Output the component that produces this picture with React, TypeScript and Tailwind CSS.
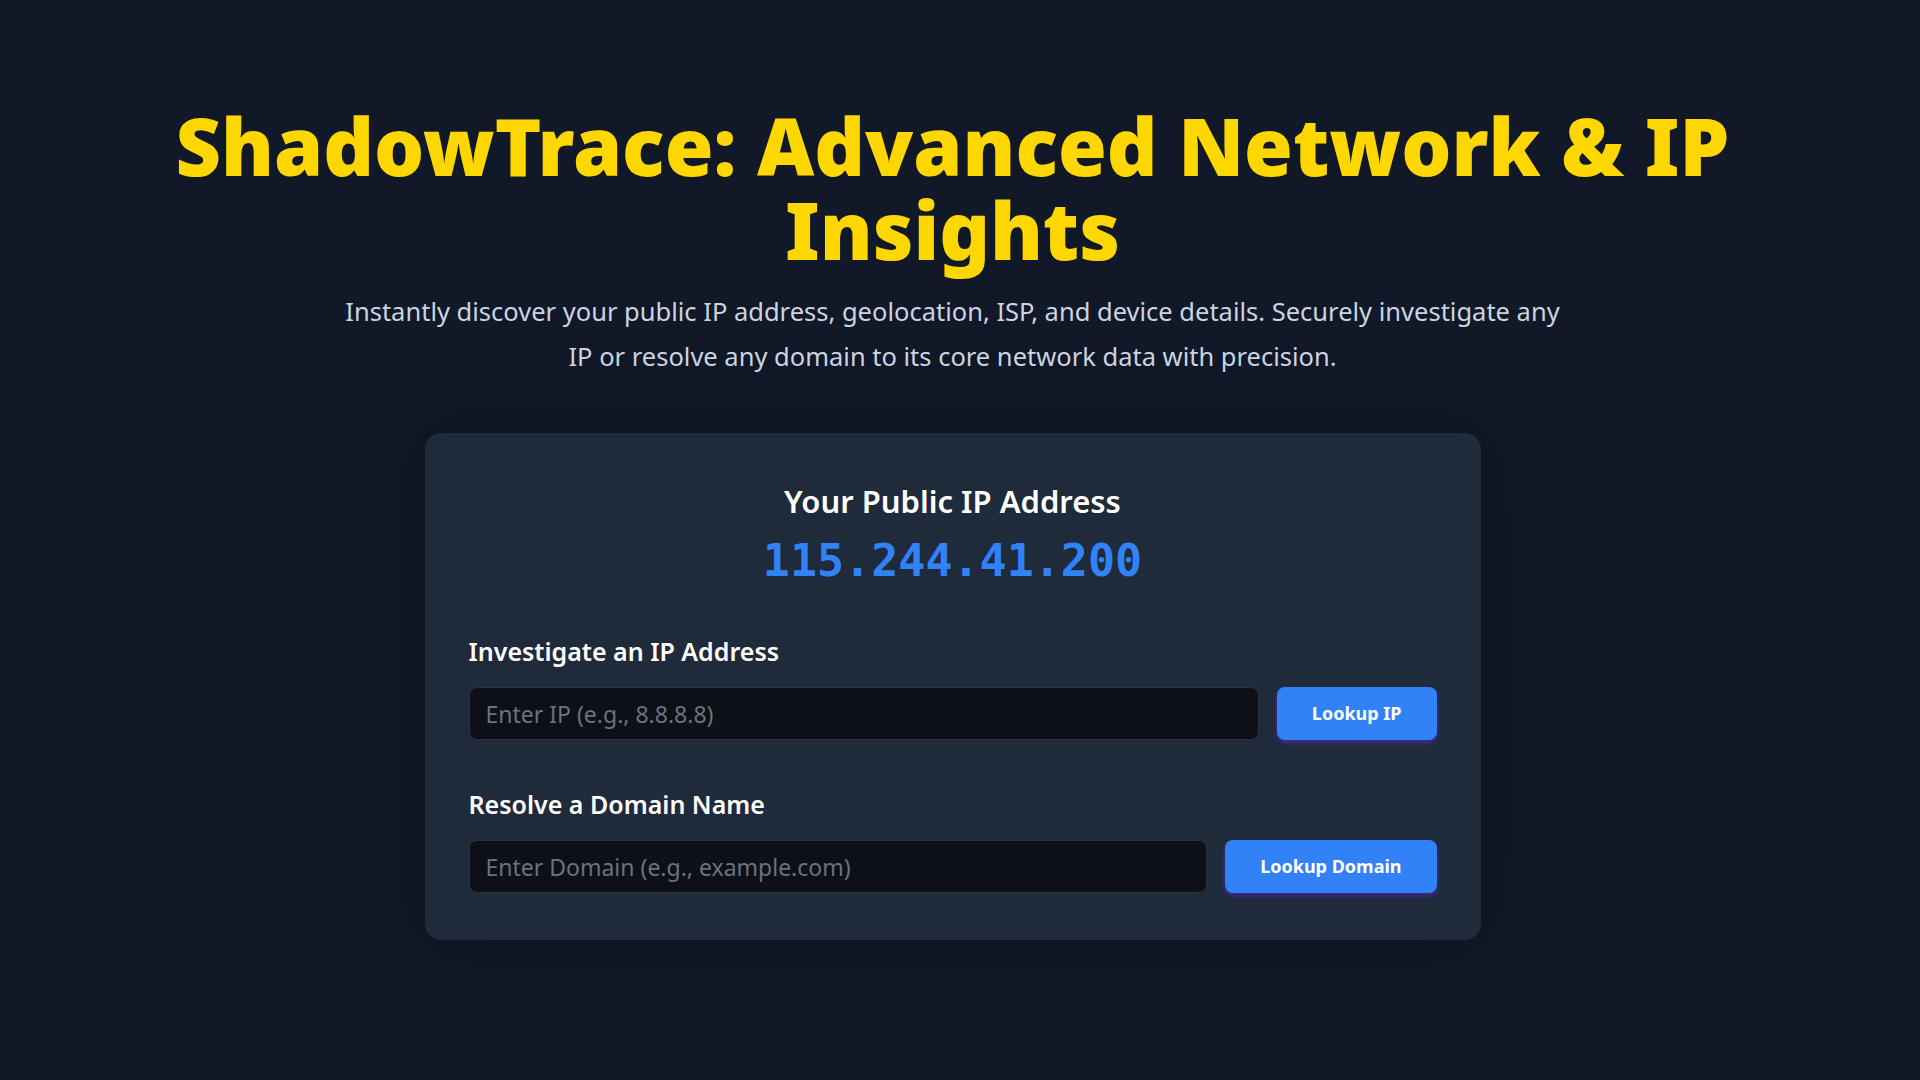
import { useState } from 'react';

const SANS = "font-['Segoe_UI','Noto_Sans','Open_Sans',sans-serif]";

interface LookupRowProps {
  label: string;
  placeholder: string;
  buttonLabel: string;
  value: string;
  onChange: (v: string) => void;
}

function LookupRow({ label, placeholder, buttonLabel, value, onChange }: LookupRowProps) {
  return (
    <div className="flex flex-col">
      <label className="text-[25px] leading-[32px] font-semibold text-white">{label}</label>
      <div className="mt-[20px] flex items-center gap-[18px]">
        <input
          type="text"
          value={value}
          onChange={(e) => onChange(e.target.value)}
          placeholder={placeholder}
          className="h-[53px] flex-1 rounded-[8px] border border-[#2b3340] bg-[#0d1117] px-[16px] text-[23px] text-white placeholder:text-[#6b7280] outline-none"
        />
        <button
          type="button"
          className="h-[53px] rounded-[8px] bg-[#3182f6] px-[35px] text-[18px] font-bold text-white shadow-[0_3px_5px_rgba(91,45,200,0.55)]"
        >
          {buttonLabel}
        </button>
      </div>
    </div>
  );
}

export default function App() {
  const [ip, setIp] = useState('');
  const [domain, setDomain] = useState('');

  return (
    <div className={`min-h-[4200px] bg-[#111827] pr-[15px] ${SANS}`}>
      <main className="mx-auto flex flex-col items-center px-8 pt-[104px]">
        <h1 className="text-center text-[79px] leading-[84px] font-black text-[#ffd700]">
          ShadowTrace: Advanced Network &amp; IP
          <br />
          Insights
        </h1>
        <p className="mt-[17px] max-w-[1240px] text-center text-[25.5px] leading-[45px] text-[#cbd5e1]">
          Instantly discover your public IP address, geolocation, ISP, and device details. Securely
          investigate any IP or resolve any domain to its core network data with precision.
        </p>

        {/* Main card */}
        <section className="mt-[54px] w-[1056px] rounded-[16px] bg-[#1f2a3b] px-[44px] pt-[48px] pb-[47px] shadow-[0_0_70px_rgba(0,0,0,0.35)]">
          <div className="flex flex-col items-center">
            <h2 className="text-[31px] leading-[40px] font-semibold text-white">Your Public IP Address</h2>
            <div className="mt-[12px] font-['DejaVu_Sans_Mono','Liberation_Mono',monospace] text-[45px] leading-[56px] font-bold text-[#3182f6]">
              115.244.41.200
            </div>
          </div>

          <div className="mt-[46px] flex flex-col gap-[48px]">
            <LookupRow
              label="Investigate an IP Address"
              placeholder="Enter IP (e.g., 8.8.8.8)"
              buttonLabel="Lookup IP"
              value={ip}
              onChange={setIp}
            />
            <LookupRow
              label="Resolve a Domain Name"
              placeholder="Enter Domain (e.g., example.com)"
              buttonLabel="Lookup Domain"
              value={domain}
              onChange={setDomain}
            />
          </div>
        </section>
      </main>
    </div>
  );
}
